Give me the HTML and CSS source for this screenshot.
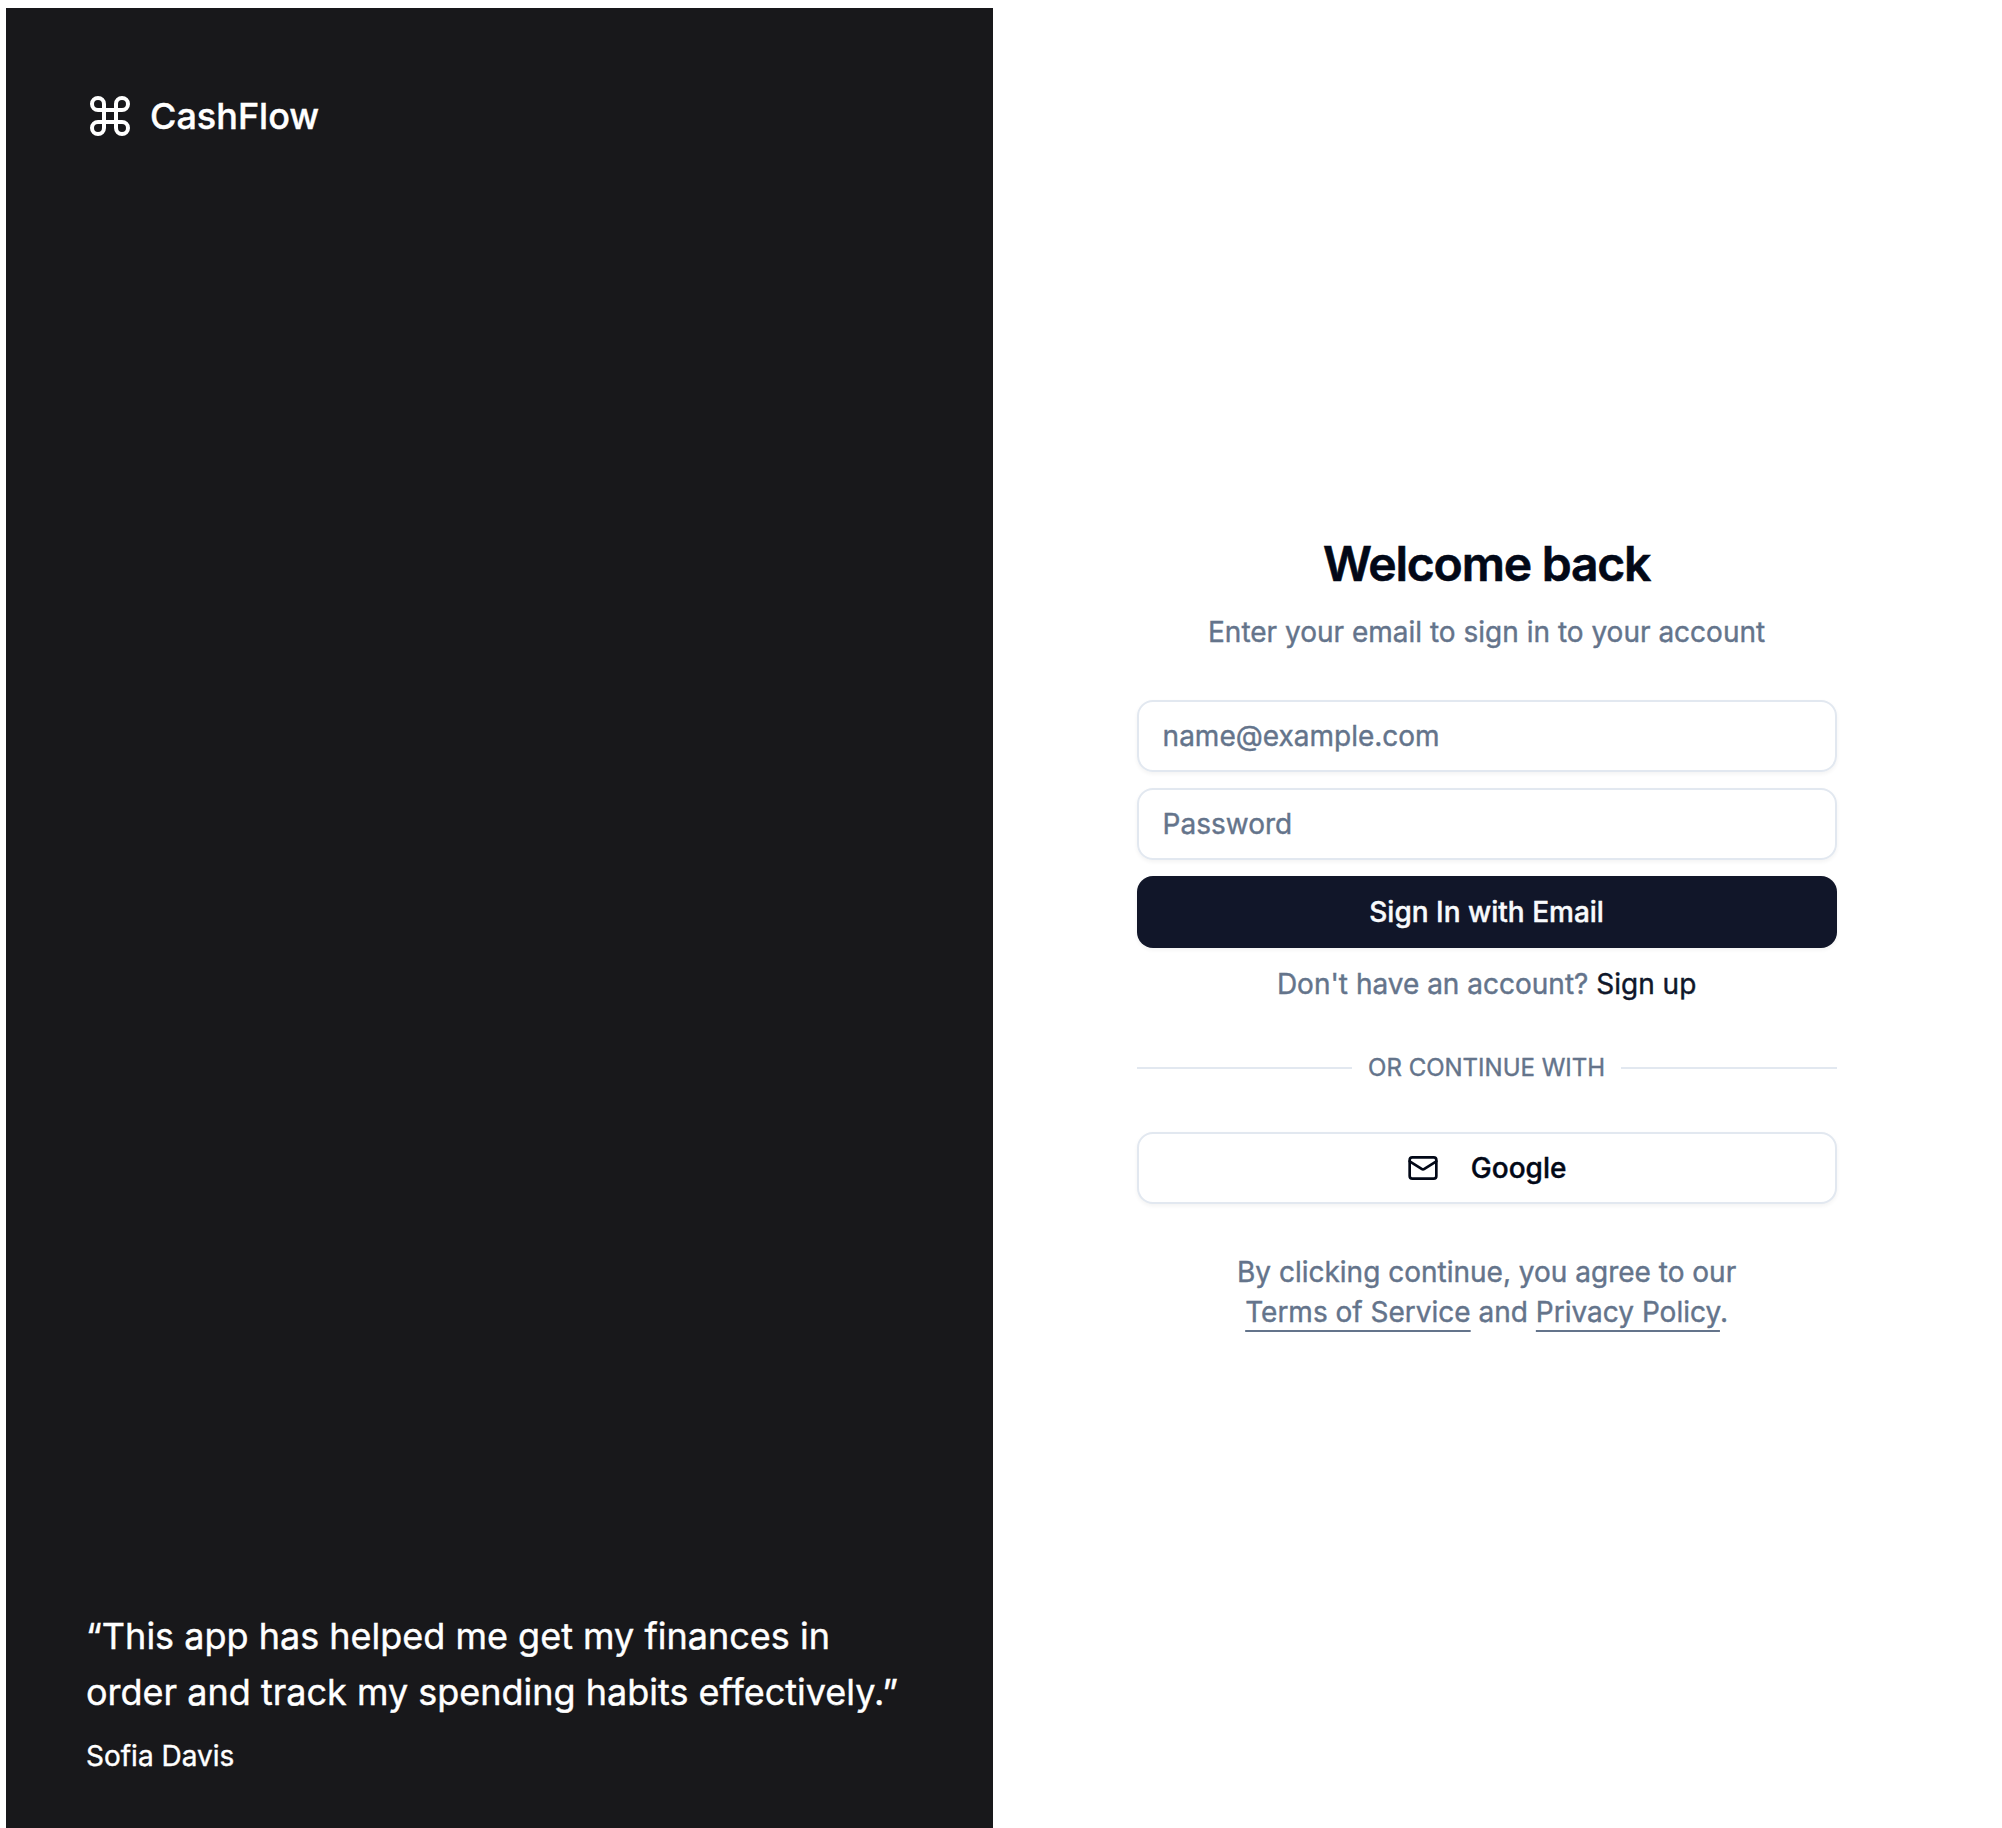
FILE: index.html
```html
<!DOCTYPE html>
<html lang="en">
<head>
<meta charset="utf-8">
<title>CashFlow – Sign in</title>
<link rel="stylesheet" href="styles.css">
</head>
<body>
<div class="page">
  <aside class="brand-panel">
    <div class="brand">
      <svg class="brand-icon" viewBox="0 0 24 24" fill="none" stroke="currentColor" stroke-width="2" stroke-linecap="round" stroke-linejoin="round"><path d="M15 6v12a3 3 0 1 0 3-3H6a3 3 0 1 0 3 3V6a3 3 0 1 0-3 3h12a3 3 0 1 0-3-3"/></svg>
      CashFlow
    </div>
    <blockquote class="quote">
      <p class="quote-text">“This app has helped me get my finances in order and track my spending habits effectively.”</p>
      <footer class="quote-author">Sofia Davis</footer>
    </blockquote>
  </aside>
  <main class="auth">
    <div class="auth-box">
      <header class="auth-header">
        <h1 class="title">Welcome back</h1>
        <p class="muted">Enter your email to sign in to your account</p>
      </header>
      <form class="form">
        <input class="input" type="email" placeholder="name@example.com">
        <input class="input" type="password" placeholder="Password">
        <button class="button button-primary" type="button">Sign In with Email</button>
        <p class="muted">Don't have an account? <a class="signup" href="#">Sign up</a></p>
      </form>
      <div class="divider">Or continue with</div>
      <button class="button button-outline" type="button">
        <svg class="button-icon" viewBox="0 0 24 24" fill="none" stroke="currentColor" stroke-width="2" stroke-linecap="round" stroke-linejoin="round"><rect width="20" height="16" x="2" y="4" rx="2"/><path d="m22 7-8.97 5.7a1.94 1.94 0 0 1-2.06 0L2 7"/></svg>
        Google
      </button>
      <p class="muted terms">By clicking continue, you agree to our <a class="link" href="#">Terms of Service</a> and <a class="link" href="#">Privacy Policy</a>.</p>
    </div>
  </main>
</div>
</body>
</html>
```
FILE: styles.css
```css
* {
  box-sizing: border-box;
  margin: 0;
  padding: 0;
}

html {
  overflow: hidden;
}

body {
  background: #fff;
  color: #020817;
  font-family: Inter, "Liberation Sans", sans-serif;
  font-size: 28px;
  line-height: 40px;
  -webkit-text-stroke: 0.4px currentColor;
}

.page {
  display: grid;
  grid-template-columns: 987px 987.2px;
  height: 1856px;
  padding: 8px 0 0 6px;
}

.brand-panel {
  display: flex;
  flex-direction: column;
  justify-content: space-between;
  padding: 80px;
  background: #18181b;
  color: #fff;
}

.brand {
  display: flex;
  align-items: center;
  gap: 16px;
  font-size: 36px;
  font-weight: 500;
  line-height: 56px;
}

.brand-icon {
  width: 48px;
  height: 48px;
}

.quote {
  display: flex;
  flex-direction: column;
  gap: 16px;
}

.quote-text {
  font-size: 36px;
  line-height: 56px;
}

.auth {
  display: flex;
  align-items: center;
  justify-content: center;
}

.auth-box {
  display: flex;
  flex-direction: column;
  gap: 48px;
  width: 700px;
}

.auth-header,
.form {
  display: flex;
  flex-direction: column;
  gap: 16px;
  text-align: center;
}

.title {
  font-size: 48px;
  font-weight: 600;
  line-height: 64px;
  letter-spacing: -0.025em;
  -webkit-text-stroke-width: 0.6px;
}

.muted {
  color: #64748b;
  -webkit-text-stroke-color: #64748b;
}

.input {
  width: 100%;
  height: 72px;
  padding: 8px 24px;
  border: 2px solid #e2e8f0;
  border-radius: 16px;
  background: transparent;
  box-shadow: 0 2px 4px rgb(0 0 0 / 0.05);
  font: inherit;
}

.input::placeholder {
  color: #64748b;
  opacity: 1;
  -webkit-text-stroke: 0.4px #64748b;
}

.button {
  display: flex;
  align-items: center;
  justify-content: center;
  gap: 32px;
  height: 72px;
  border: 0;
  border-radius: 16px;
  box-shadow: 0 2px 4px rgb(0 0 0 / 0.05);
  font: inherit;
  font-weight: 500;
}

.button-primary {
  background: #111629;
  color: #f8fafc;
  -webkit-text-stroke-color: #f8fafc;
}

.button-outline {
  border: 2px solid #e2e8f0;
  background: #fff;
  color: #020817;
}

.button-icon {
  width: 32px;
  height: 32px;
}

.signup {
  color: #0f172a;
  text-decoration: none;
  -webkit-text-stroke-color: #0f172a;
}

.divider {
  display: flex;
  align-items: center;
  gap: 16px;
  color: #64748b;
  font-size: 24px;
  line-height: 32px;
  text-transform: uppercase;
}

.divider::before,
.divider::after {
  content: "";
  flex: 1;
  height: 2px;
  background: #e2e8f0;
}

.terms {
  padding: 0 64px;
  text-align: center;
}

.link {
  color: inherit;
  text-decoration: underline;
  text-decoration-thickness: 2px;
  text-underline-offset: 8px;
}
```
